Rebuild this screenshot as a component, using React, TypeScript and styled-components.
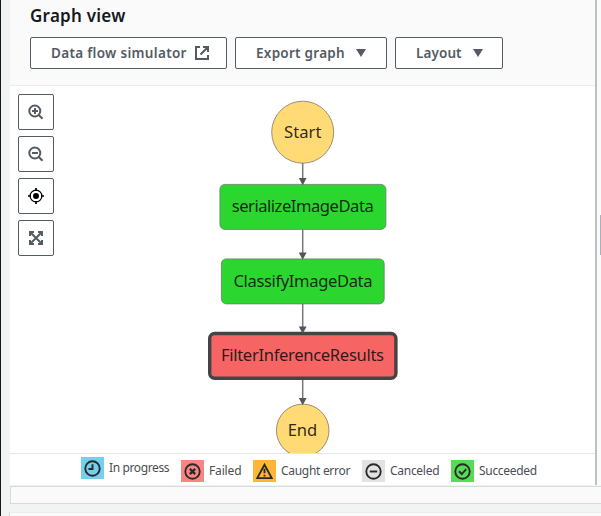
import React from "react";
import styled, { createGlobalStyle } from "styled-components";

const GlobalStyle = createGlobalStyle`
  * { box-sizing: border-box; }
  body { margin: 0; background: #f2f3f3; }
  button { font: inherit; padding: 0; margin: 0; }
`;

const Page = styled.div`
  display: flex;
  flex-direction: column;
  width: 601px;
  height: 516px;
  overflow: hidden;
  border-left: 1px solid #16191f;
  background: #f2f3f3;
  font-family: "Noto Sans", "Open Sans", sans-serif;
  color: #545b64;
`;

const Workspace = styled.div`
  display: flex;
  height: 485px;
  padding-left: 9px;
`;

const GraphPanel = styled.section`
  display: flex;
  flex-direction: column;
  width: 585px;
  background: #fff;
`;

const Divider = styled.div`
  width: 2px;
  background: #b8c3c1;
`;

const SidePanel = styled.div`
  flex: 1;
  display: flex;
  justify-content: flex-end;
  padding-top: 215px;
  background: #fafafa;
`;

const SideHandle = styled.div`
  width: 1px;
  height: 40px;
  background: #aab0b5;
`;

const Header = styled.header`
  height: 86px;
  padding: 5px 0 0 20px;
  background: #fafafa;
  border-bottom: 1px solid #eaeded;
`;

const Title = styled.h2`
  margin: 0;
  height: 32px;
  font-size: 17px;
  line-height: 22px;
  font-weight: 600;
  letter-spacing: 0.25px;
  color: #16191f;
`;

const ButtonRow = styled.div`
  display: flex;
  gap: 8px;
`;

const ActionButton = styled.button<{ $width: number; $gap: number; $track: number }>`
  display: flex;
  align-items: center;
  width: ${(p) => p.$width}px;
  height: 32px;
  padding-left: 20px;
  gap: ${(p) => p.$gap}px;
  border: 1px solid #545b64;
  border-radius: 2px;
  background: #fff;
  color: #545b64;
  font-size: 13.5px;
  line-height: 20px;
  font-weight: 600;
  letter-spacing: ${(p) => p.$track}px;
  white-space: nowrap;
`;

const Canvas = styled.div`
  display: flex;
  height: 367px;
  padding-left: 8px;
`;

const ToolColumn = styled.div`
  display: flex;
  flex-direction: column;
  gap: 6px;
  width: 36px;
  padding-top: 8px;
`;

const ToolButton = styled.button`
  display: flex;
  align-items: center;
  justify-content: center;
  width: 36px;
  height: 36px;
  border: 1px solid #545b64;
  border-radius: 2px;
  background: #fff;
`;

const Diagram = styled.svg`
  display: block;
  margin-left: 146px;
`;

const NodeLabel = styled.text`
  font-family: "Noto Sans", "Open Sans", sans-serif;
  font-size: 16.6px;
  fill: #111;
  fill-opacity: 0.9;
`;

const Legend = styled.footer`
  display: flex;
  align-items: flex-start;
  height: 32px;
  padding: 6px 0 0 71px;
  border-top: 1px solid #e4e6e6;
`;

const LegendItem = styled.div<{ $width: number; $raised?: boolean; $track: number }>`
  display: flex;
  align-items: center;
  gap: 5px;
  width: ${(p) => p.$width}px;
  height: 22px;
  margin-top: ${(p) => (p.$raised ? -3 : 0)}px;
  font-size: 12px;
  line-height: 20px;
  letter-spacing: ${(p) => p.$track}px;
  color: #4a4e54;
  white-space: nowrap;
`;

const Swatch = styled.span<{ $color: string }>`
  display: flex;
  align-items: center;
  justify-content: center;
  flex: none;
  width: 23px;
  height: 22px;
  background: ${(p) => p.$color};
`;

const Strip = styled.div`
  height: 18px;
  margin: 1px 0 0 9px;
  border: 1px solid #d5dbdb;
  border-right: 0;
  background: #fafafa;
`;

const NextPanel = styled.div`
  flex: 1;
  margin: 8px 0 0 8px;
  border-top: 1px solid #eaeded;
  border-left: 1px solid #d5dbdb;
  background: #fafafa;
`;

const ExternalIcon = () => (
  <svg width="16" height="16" viewBox="0 0 16 16" fill="none" stroke="#545b64" strokeWidth="2">
    <path d="M6 2H2v12h12v-4M9 2h5v5M14 2L6.5 9.5" />
  </svg>
);

const Caret = () => (
  <svg width="12" height="10" viewBox="0 0 12 10">
    <path d="M1 1h10L6 9z" fill="#545b64" />
  </svg>
);

const Zoom = ({ plus }: { plus?: boolean }) => (
  <svg width="16" height="16" viewBox="0 0 16 16" fill="none" stroke="#545b64">
    <circle cx="6.8" cy="7" r="5.5" strokeWidth="2" />
    <path d="M10.8 11l3.7 3.7" strokeWidth="2.1" />
    <path d={plus ? "M4 7h6M7 4v6" : "M4 7h6"} strokeWidth="2" />
  </svg>
);

const Target = () => (
  <svg width="16" height="16" viewBox="0 0 16 16" fill="none" stroke="#000">
    <circle cx="8" cy="8" r="5.9" strokeWidth="1.2" />
    <circle cx="8" cy="8" r="3" fill="#000" stroke="none" />
    <path d="M8 0v3M8 13v3M0 8h3M13 8h3" strokeWidth="1.7" />
  </svg>
);

const Expand = () => (
  <svg width="16" height="16" viewBox="0 0 16 16" fill="none" stroke="#545b64" strokeWidth="2">
    <path d="M2 6V2h4M10 2h4v4M14 10v4h-4M6 14H2v-4" />
    <path d="M2 2l12 12M14 2L2 14" strokeWidth="2" />
  </svg>
);

const shapes: Record<string, string> = {
  clock: "M8 4v4.5H4.2",
  cross: "M5.5 5.5l5 5M10.5 5.5l-5 5",
  minus: "M4.5 8h7",
  check: "M4.7 7.8l2.6 2.6 4.2-4.6",
};

const StatusIcon = ({ kind }: { kind: string }) => (
  <svg width="17" height="17" viewBox="0 0 16 16" fill="none" stroke="#292929" strokeWidth="1.75">
    {kind === "warning" ? (
      <>
        <path d="M8 1.6L14.8 14.2H1.2z" />
        <path d="M8 5.5v4.2M8 11v1.6" />
      </>
    ) : (
      <>
        <circle cx="8" cy="8" r="6.8" />
        <path d={shapes[kind]} strokeWidth={kind === "cross" ? 2.1 : 1.8} />
      </>
    )}
  </svg>
);

const legend = [
  { kind: "clock", label: "In progress", color: "#75cfee", width: 100, track: -0.38, raised: true },
  { kind: "cross", label: "Failed", color: "#f88583", width: 72, track: -0.15 },
  { kind: "warning", label: "Caught error", color: "#ffb636", width: 109, track: -0.3 },
  { kind: "minus", label: "Canceled", color: "#e2e2e2", width: 89, track: -0.28 },
  { kind: "check", label: "Succeeded", color: "#56dd55", width: 95, track: -0.3 },
];

const edges = [
  [163, 184.5],
  [229.5, 259],
  [304, 333],
  [380, 404.5],
];

const Graph = () => (
  <Diagram width="205" height="367" viewBox="200 86 205 367">
    <g fill="#ffda75" stroke="#7c7767" strokeWidth="0.8">
      <circle cx="302.7" cy="132.2" r="31" />
      <circle cx="302.7" cy="430.4" r="26.3" />
    </g>
    <g fill="#2bd62e" stroke="#64806a" strokeWidth="0.8">
      <rect x="219.9" y="184.4" width="166" height="45" rx="5" />
      <rect x="221.4" y="258.9" width="162.8" height="45" rx="5" />
    </g>
    <rect x="209.7" y="333.5" width="186.2" height="44.8" rx="5" fill="#f76464" stroke="#444" strokeWidth="3.4" />
    {edges.map(([from, to]) => (
      <g key={from}>
        <path d={`M302.7 ${from}V${to - 5}`} stroke="#777" strokeWidth="1.5" />
        <path d={`M298.8 ${to - 6.5}h7.8L302.7 ${to + 0.8}z`} fill="#555" />
      </g>
    ))}
    <NodeLabel x="284" y="138" textLength="37.5">Start</NodeLabel>
    <NodeLabel x="231.7" y="212" textLength="142">serializeImageData</NodeLabel>
    <NodeLabel x="233.5" y="287" textLength="139">ClassifyImageData</NodeLabel>
    <NodeLabel x="221" y="361" textLength="163">FilterInferenceResults</NodeLabel>
    <NodeLabel x="287.7" y="436" textLength="29.5">End</NodeLabel>
  </Diagram>
);

export default function App() {
  return (
    <Page>
      <GlobalStyle />
      <Workspace>
        <GraphPanel>
          <Header>
            <Title>Graph view</Title>
            <ButtonRow>
              <ActionButton $width={197} $gap={7} $track={0.32}>
                Data flow simulator <ExternalIcon />
              </ActionButton>
              <ActionButton $width={152} $gap={10} $track={0.27}>
                Export graph <Caret />
              </ActionButton>
              <ActionButton $width={108} $gap={10} $track={0.1}>
                Layout <Caret />
              </ActionButton>
            </ButtonRow>
          </Header>
          <Canvas>
            <ToolColumn>
              <ToolButton aria-label="Zoom in"><Zoom plus /></ToolButton>
              <ToolButton aria-label="Zoom out"><Zoom /></ToolButton>
              <ToolButton aria-label="Center"><Target /></ToolButton>
              <ToolButton aria-label="Fit to view"><Expand /></ToolButton>
            </ToolColumn>
            <Graph />
          </Canvas>
          <Legend>
            {legend.map((item) => (
              <LegendItem key={item.kind} $width={item.width} $raised={item.raised} $track={item.track}>
                <Swatch $color={item.color}><StatusIcon kind={item.kind} /></Swatch>
                {item.label}
              </LegendItem>
            ))}
          </Legend>
        </GraphPanel>
        <Divider />
        <SidePanel><SideHandle /></SidePanel>
      </Workspace>
      <Strip />
      <NextPanel />
    </Page>
  );
}
